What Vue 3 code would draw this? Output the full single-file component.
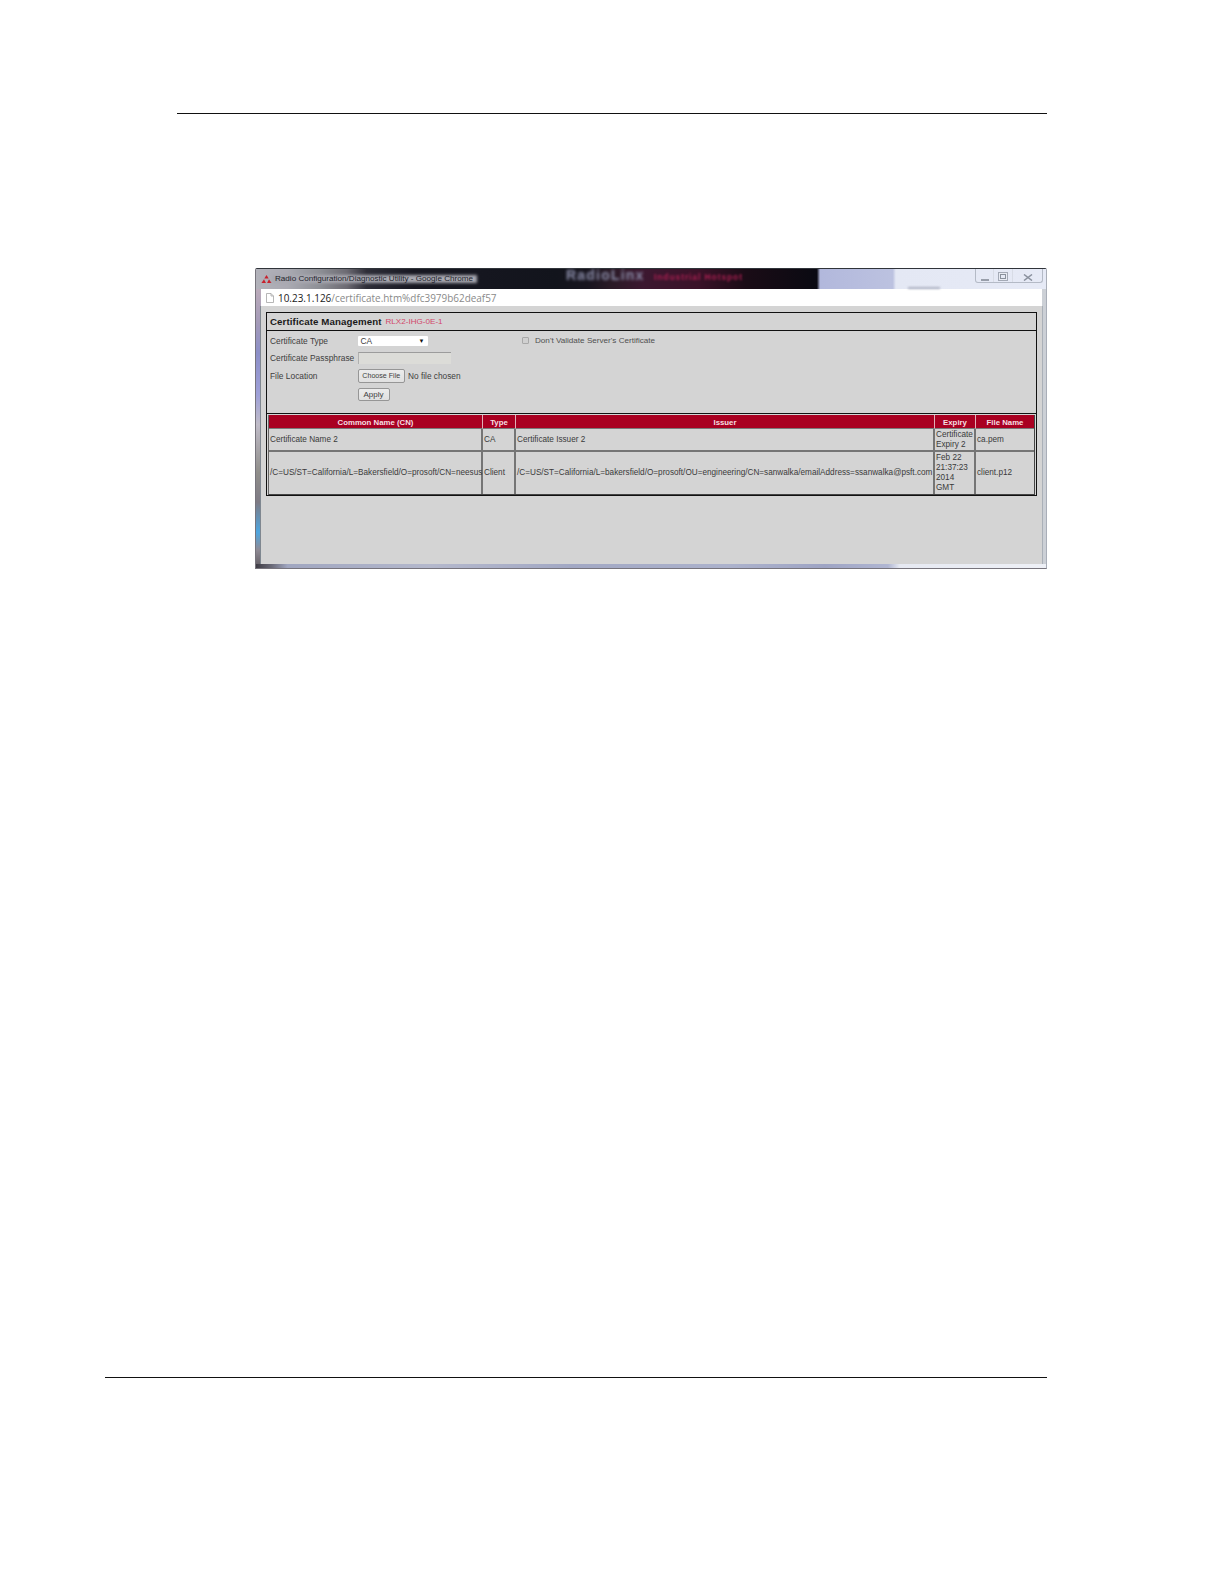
<script setup>
const columns = ['Common Name (CN)', 'Type', 'Issuer', 'Expiry', 'File Name']
const rows = [
  {
    cells: ['Certificate Name 2', 'CA', 'Certificate Issuer 2', ['Certificate', 'Expiry 2'], 'ca.pem'],
    kind: 'short',
  },
  {
    cells: [
      '/C=US/ST=California/L=Bakersfield/O=prosoft/CN=neesus',
      'Client',
      '/C=US/ST=California/L=bakersfield/O=prosoft/OU=engineering/CN=sanwalka/emailAddress=ssanwalka@psft.com',
      ['Feb 22', '21:37:23', '2014', 'GMT'],
      'client.p12',
    ],
    kind: 'tall',
  },
]
</script>

<template>
  <div class="page">
    <div class="rule top-rule"></div>

    <div class="window">
      <div class="titlebar">
        <svg class="logo" viewBox="0 0 12 10" width="11" height="9">
          <path d="M6 0 L8.4 4 H3.6 Z" fill="#c8202c" />
          <path d="M3.2 4.6 L5.4 9 H0.4 Z" fill="#c8202c" />
          <path d="M8.8 4.6 L11.6 9 H6.6 Z" fill="#c8202c" />
        </svg>
        <span class="title">Radio Configuration/Diagnostic Utility - Google Chrome</span>
        <span class="brand">RadioLinx</span>
        <span class="brand-sub">Industrial Hotspot</span>
        <span class="smudge"></span>
        <div class="controls">
          <span class="ctl ctl-min"><i></i></span>
          <span class="ctl ctl-max"><i></i></span>
          <span class="ctl ctl-close">
            <svg viewBox="0 0 10 7" width="10" height="7">
              <path d="M1 .5 L9 6.5 M9 .5 L1 6.5" stroke="#8a919e" stroke-width="1.5" fill="none" />
            </svg>
          </span>
        </div>
      </div>

      <div class="addressbar">
        <svg class="doc" viewBox="0 0 8 10" width="8" height="10">
          <path d="M.5 .5 H5 L7.5 3 V9.5 H.5 Z M5 .5 V3 H7.5" fill="#fff" stroke="#a4a4a4" stroke-width=".8" />
        </svg>
        <span class="host">10.23.1.126</span><span class="path">/certificate.htm%dfc3979b62deaf57</span>
      </div>

      <div class="content">
        <div class="panel">
          <div class="panel-head">
            <strong>Certificate Management</strong>
            <span class="device">RLX2-IHG-0E-1</span>
          </div>

          <div class="form">
            <div class="form-left">
              <div class="frow frow-type">
                <label>Certificate Type</label>
                <div class="select">CA<span class="arrow">▼</span></div>
              </div>
              <div class="frow frow-pass">
                <label>Certificate Passphrase</label>
                <div class="input"></div>
              </div>
              <div class="frow frow-file">
                <label>File Location</label>
                <div class="btn btn-file">Choose File</div>
                <span class="nofile">No file chosen</span>
              </div>
              <div class="frow frow-apply">
                <label></label>
                <div class="btn btn-apply">Apply</div>
              </div>
            </div>
            <div class="validate">
              <span class="check"></span>
              <span>Don't Validate Server's Certificate</span>
            </div>
          </div>

          <div class="table">
            <div v-for="c in columns" :key="c" class="th">{{ c }}</div>
            <template v-for="r in rows" :key="r.kind">
              <div v-for="(cell, i) in r.cells" :key="i" class="td" :class="r.kind">
                <template v-if="Array.isArray(cell)">
                  <div v-for="line in cell" :key="line" class="line">{{ line }}</div>
                </template>
                <template v-else>{{ cell }}</template>
              </div>
            </template>
          </div>
        </div>
      </div>

      <div class="bottom-edge"></div>
    </div>

    <div class="rule bottom-rule"></div>
  </div>
</template>

<style scoped>
.page {
  width: 1224px;
  height: 1584px;
  background: #fff;
  padding-top: 113px;
  box-sizing: border-box;
  font-family: "Liberation Sans", Arial, sans-serif;
  overflow: hidden;
}
.rule {
  height: 1px;
  background: #111;
}
.top-rule {
  margin-left: 177px;
  width: 870px;
}
.bottom-rule {
  margin-left: 105px;
  width: 942px;
  margin-top: 808px;
}
.window {
  margin: 154px 0 0 255px;
  width: 792px;
  height: 301px;
  box-sizing: border-box;
  display: flex;
  flex-direction: column;
  border: 1px solid #77747c;
  border-top-color: #30343a;
  border-right-color: #a9aeb8;
  border-radius: 2px 2px 0 0;
  background:
    linear-gradient(180deg, #c9b6bc 0%, #a49ab8 18%, #8c8fc8 28%, #9ea0d8 42%, #c0bcc8 52%, #908e8a 68%, #7e7a84 78%, #4ea6e0 88%, #8f8a94 94%, #5f5a60 100%) 0 0 / 5px 100% no-repeat,
    #ccd0d6;
  filter: blur(.3px);
}
.titlebar {
  height: 20px;
  flex: none;
  display: flex;
  align-items: center;
  position: relative;
  padding-left: 5px;
  background: linear-gradient(90deg,
    #b2b2ba 0, #aaaab2 4%, #8e9096 8%, #6c6a72 11.5%, #2e2e38 14%, #181822 20%, #12141c 38%,
    #18151f 42%, #2a1a26 45%, #3c1830 49%, #3a1228 56%, #1a0c16 62%, #0a0a12 71%, #b2b8dc 71.4%, #bcc2e0 80.6%, #e4e8f4 81%, #e6eaf6 100%);
}
.logo {
  flex: none;
}
.title {
  position: relative;
  z-index: 0;
  margin: 0 0 2px 3px;
  font-size: 8.1px;
  color: #23242c;
  white-space: nowrap;
}
.title::before {
  content: "";
  position: absolute;
  z-index: -1;
  left: -3px;
  right: -4px;
  top: 1px;
  bottom: 0;
  background: #a8a8b0;
  filter: blur(1.5px);
}
.brand {
  position: absolute;
  left: 310px;
  top: -2px;
  font-size: 14px;
  font-weight: bold;
  letter-spacing: 1.2px;
  color: #8a8ca8;
  filter: blur(1.4px);
}
.brand-sub {
  position: absolute;
  left: 398px;
  top: 3px;
  font-size: 8.5px;
  font-weight: bold;
  letter-spacing: .9px;
  color: #a81f50;
  filter: blur(1px);
}
.smudge {
  position: absolute;
  left: 652px;
  top: 18px;
  width: 32px;
  height: 2px;
  background: #aeb2c2;
  filter: blur(1px);
}
.controls {
  position: absolute;
  right: 3px;
  top: 0;
  height: 14px;
  width: 68px;
  box-sizing: border-box;
  display: flex;
  border: 1px solid #b4bac6;
  border-top: 0;
  border-radius: 0 0 3px 3px;
}
.ctl {
  display: flex;
  align-items: center;
  justify-content: center;
  height: 13px;
  box-sizing: border-box;
  border-right: 1px solid #d8dce6;
}
.ctl:last-child {
  border-right: 0;
}
.ctl-min {
  width: 18px;
}
.ctl-min i {
  display: block;
  width: 8px;
  height: 2px;
  margin-top: 8px;
  background: #989eaa;
}
.ctl-max {
  width: 19px;
}
.ctl-max i {
  display: block;
  width: 4px;
  height: 3px;
  margin-top: 2px;
  border: 1px solid #8a919c;
  box-shadow: 0 0 0 1px #e8ebf3, 0 0 0 2px #a4aab6;
}
.ctl-close {
  width: 29px;
  padding-top: 3px;
}
.addressbar {
  height: 17px;
  flex: none;
  margin: 0 4px 0 5px;
  background: #fff;
  display: flex;
  align-items: center;
  padding-left: 5px;
  font-family: "Open Sans", "Liberation Sans", sans-serif;
  font-size: 9.95px;
  white-space: nowrap;
  box-sizing: border-box;
}
.doc {
  flex: none;
  margin-right: 4px;
}
.host {
  color: #1a1a1a;
}
.path {
  color: #8a8a8a;
}
.content {
  flex: 1;
  min-height: 0;
  margin: 0 4px 0 5px;
  background: #d4d4d4;
  padding: 6px 0 0 5px;
  box-sizing: border-box;
  box-shadow: 1px 0 0 #aab0b8, -1px 0 0 #7f8790, 0 1px 0 #4a5270;
}
.panel {
  width: 771px;
  height: 184px;
  box-sizing: border-box;
  border: 1px solid #111;
  display: flex;
  flex-direction: column;
  color: #3e3e3e;
  font-size: 8.4px;
}
.panel-head {
  height: 18px;
  flex: none;
  display: flex;
  align-items: center;
  padding-left: 3px;
  border-bottom: 1px solid #111;
  box-sizing: border-box;
}
.panel-head strong {
  font-size: 9.7px;
  color: #1a1a1a;
  letter-spacing: .1px;
}
.device {
  margin-left: 4px;
  color: #d2476a;
  font-size: 8.1px;
}
.form {
  height: 83px;
  flex: none;
  display: flex;
  border-bottom: 1px solid #111;
  box-sizing: border-box;
  padding-left: 3px;
}
.form-left {
  width: 252px;
  flex: none;
  display: flex;
  flex-direction: column;
}
.frow {
  display: flex;
  align-items: center;
}
.frow label {
  width: 87.5px;
  flex: none;
  white-space: nowrap;
}
.frow-type {
  height: 19px;
}
.frow-pass {
  height: 15px;
}
.frow-file {
  height: 22px;
}
.frow-apply {
  height: 15px;
}
.select {
  width: 70px;
  height: 10px;
  background: #fff;
  padding-left: 3px;
  box-sizing: border-box;
  line-height: 10px;
  position: relative;
  border-radius: 1px;
}
.arrow {
  position: absolute;
  right: 3px;
  top: 0;
  font-size: 6px;
  color: #111;
}
.input {
  width: 93px;
  height: 12px;
  background: #dcdcd8;
  border-top: 1px solid #9c9c9c;
  border-left: 1px solid #b0b0b0;
  box-sizing: border-box;
}
.btn {
  display: flex;
  align-items: center;
  justify-content: center;
  background: linear-gradient(180deg, #ececec, #e0e0e0);
  border: 1px solid #969696;
  border-radius: 2px;
  box-sizing: border-box;
}
.btn-file {
  width: 47.5px;
  height: 14px;
  font-size: 7.1px;
}
.btn-apply {
  width: 32px;
  height: 13px;
  font-size: 8px;
}
.nofile {
  margin-left: 3px;
  font-size: 8.3px;
  white-space: nowrap;
}
.validate {
  display: flex;
  align-items: center;
  height: 19px;
  box-sizing: border-box;
  color: #505050;
  font-size: 8.12px;
  white-space: nowrap;
}
.check {
  width: 7px;
  height: 7px;
  box-sizing: border-box;
  border: 1px solid #a8a8a8;
  background: #d0d0d0;
  border-radius: 1px;
  margin-right: 6px;
}
.table {
  flex: 1;
  min-height: 0;
  margin: 1px 1px 0 1px;
  display: grid;
  grid-template-columns: 214px 33px 419px 41px 58px;
  grid-template-rows: 14px 23px 42px;
  border-bottom: 1px solid #444;
  border-left: 1px solid #666;
  border-right: 1px solid #444;
  box-sizing: border-box;
  width: 767px;
}
.th {
  background: #a90021;
  color: #f6dfe2;
  font-weight: bold;
  font-size: 7.8px;
  display: flex;
  align-items: center;
  justify-content: center;
  padding-top: 1px;
  border-right: 1px solid #e0b0b8;
  border-bottom: 1px solid #7a7a7a;
  box-sizing: border-box;
  white-space: nowrap;
}
.th:nth-child(5) {
  border-right: 0;
}
.td {
  display: flex;
  flex-direction: column;
  justify-content: center;
  padding-left: 1px;
  border-right: 2px solid #757575;
  box-sizing: border-box;
  white-space: nowrap;
  color: #3a3a3a;
  font-size: 8.2px;
  line-height: 10px;
}
.td.short {
  border-bottom: 2px solid #757575;
}
.td:nth-child(5n) {
  border-right: 0;
}
.bottom-edge {
  height: 4px;
  flex: none;
  background: linear-gradient(90deg, #3e3c44 0, #6a6a78 2%, #a0a6c0 4%, #b4b8cc 22%, #a2a8c4 40%, #acb2cc 60%, #9ea4c4 72%, #b0b6d2 80%, #e6e9f2 81.5%, #eef0f6 100%);
}
</style>

<style>
body {
  margin: 0;
  background: #fff;
}
</style>
